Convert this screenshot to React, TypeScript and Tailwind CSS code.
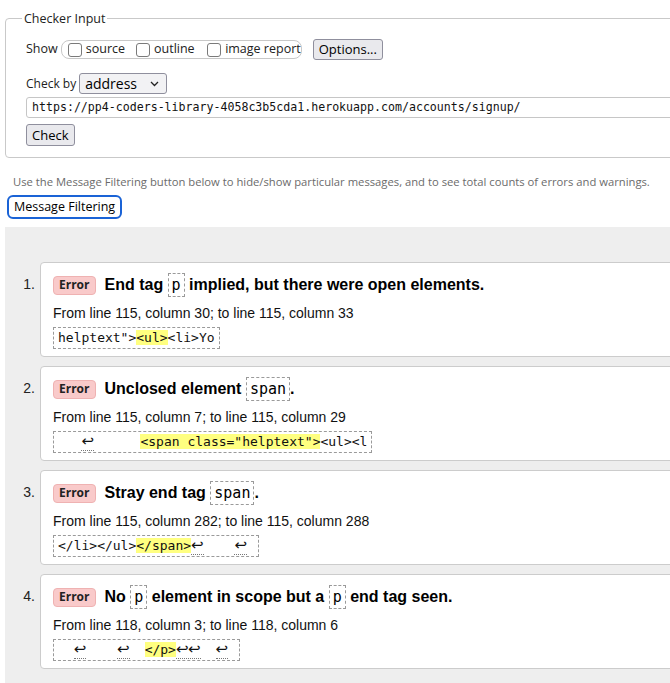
import type { ReactNode } from 'react'

const ui = "font-['Open_Sans',sans-serif]"
const mono = "font-['DejaVu_Sans_Mono',monospace]"

function Box({ children }: { children: ReactNode }) {
  return (
    <span className={`${mono} inline-block h-[24px] border border-dashed border-[#9a9a9a] px-[3px] align-middle text-[15px] font-normal leading-[22px]`}>
      {children}
    </span>
  )
}

function Mark({ children }: { children: ReactNode }) {
  return <span className="bg-[#ffff80]">{children}</span>
}

function Ret() {
  return (
    <span className="inline-block w-[12px] text-center font-['DejaVu_Sans',sans-serif] text-[15px] leading-[18px]">
      <span className="border-b border-dotted border-[#777]">↩</span>
    </span>
  )
}

function Checkbox({ label }: { label: string }) {
  return (
    <span className="flex items-center gap-[4px] whitespace-nowrap">
      <span className="h-[14px] w-[14px] rounded-[3px] border border-[#7a7a7a] bg-white" />
      <span>{label}</span>
    </span>
  )
}

function Message({ n, title, where, code }: { n: number; title: ReactNode; where: string; code: ReactNode }) {
  return (
    <div className="flex">
      <div className="flex h-[36px] w-[35px] shrink-0 items-end justify-end pr-[5px] text-[14px] text-[#222]">
        <span className="mb-[3px]">{n}.</span>
      </div>
      <div className="flex-1 rounded-[4px] border border-[#cccccc] bg-white pb-[7px] pl-[12px] pt-[10px]">
        <div className="flex h-[24px] items-center">
          <span className={`${ui} mr-[9px] flex h-[19px] items-center rounded-[4px] border border-[#efb2b2] bg-[#f9caca] px-[5px] text-[12px] font-bold text-[#222]`}>
            Error
          </span>
          <span className="whitespace-pre text-[16px] font-bold text-black">{title}</span>
        </div>
        <p className="mt-[8px] text-[14px] leading-[16px] text-[#111]">{where}</p>
        <div className={`${mono} mt-[6px] inline-block h-[22px] whitespace-pre border border-dashed border-[#9a9a9a] px-[4px] text-[13px] leading-[20px] text-[#111]`}>
          {code}
        </div>
      </div>
    </div>
  )
}

export default function App() {
  return (
    <div className="h-[683px] w-[670px] overflow-hidden bg-white font-['Liberation_Sans',Arial,sans-serif] text-black">
      <div className="w-[760px] px-[5px] pt-[10px]">
        <fieldset className={`${ui} rounded-[4px] border border-[#c9c9c9] pb-[11px] pl-[20px] text-[12.5px] text-[#222]`}>
          <legend className="-ml-[4px] px-[2px] leading-[17px]">Checker Input</legend>

          <div className="mt-[12px] flex h-[21px] items-center">
            <span className="mr-[3px]">Show</span>
            <span className="flex h-[19px] w-[241px] items-center rounded-[8px] border border-[#c8c8c8] pl-[6px]">
              <span className="w-[71px]"><Checkbox label="source" /></span>
              <span className="w-[74px]"><Checkbox label="outline" /></span>
              <Checkbox label="image report" />
            </span>
            <button className="ml-[11px] h-[21px] rounded-[3px] border border-[#8f8f9d] bg-[#e9e9ed] px-[5px] text-[13px] leading-[19px] text-black">
              Options...
            </button>
          </div>

          <div className="mt-[13px] flex h-[21px] items-center">
            <span className="mr-[3px] text-[12px]">Check by</span>
            <span className="flex h-[21px] w-[88px] items-center justify-between rounded-[3px] border border-[#8f8f9d] bg-[#f2f2f4] pl-[5px] pr-[7px] text-[14px] text-black">
              address
              <svg width="9" height="6" viewBox="0 0 9 6" fill="none" stroke="#222" strokeWidth="1.3">
                <path d="M1 1l3.5 3.5L8 1" />
              </svg>
            </span>
          </div>

          <div className={`${mono} mt-[3px] flex h-[21px] items-center rounded-[3px] border border-[#c6c6c6] pl-[5px] text-[11.6px] text-[#111]`}>
            https://pp4-coders-library-4058c3b5cda1.herokuapp.com/accounts/signup/
          </div>

          <button className="mt-[6px] h-[22px] rounded-[3px] border border-[#8f8f9d] bg-[#e9e9ed] px-[5px] text-[13px] leading-[20px] text-black">
            Check
          </button>
        </fieldset>

        <p className={`${ui} mt-[16px] pl-[8px] text-[11.25px] leading-[16px] text-[#6b6b6b]`}>
          Use the Message Filtering button below to hide/show particular messages, and to see total counts of errors and warnings.
        </p>

        <button className={`${ui} ml-[2px] mt-[5px] h-[24px] rounded-[6px] border-2 border-[#1a63d6] bg-white px-[5px] text-[12.5px] leading-[20px] text-black`}>
          Message Filtering
        </button>

        <div className="mt-[8px] flex h-[500px] flex-col gap-[9px] bg-[#eeeeee] pt-[35px]">
          <Message
            n={1}
            title={<>End tag <Box>p</Box> implied, but there were open elements.</>}
            where="From line 115, column 30; to line 115, column 33"
            code={<>helptext"&gt;<Mark>&lt;ul&gt;</Mark>&lt;li&gt;Yo</>}
          />
          <Message
            n={2}
            title={<>Unclosed element <Box>span</Box>.</>}
            where="From line 115, column 7; to line 115, column 29"
            code={<>{'   '}<Ret />{'      '}<Mark>&lt;span class="helptext"&gt;</Mark>&lt;ul&gt;&lt;l</>}
          />
          <Message
            n={3}
            title={<>Stray end tag <Box>span</Box>.</>}
            where="From line 115, column 282; to line 115, column 288"
            code={<>&lt;/li&gt;&lt;/ul&gt;<Mark>&lt;/span&gt;</Mark><Ret />{'    '}<Ret /> </>}
          />
          <Message
            n={4}
            title={<>No <Box>p</Box> element in scope but a <Box>p</Box> end tag seen.</>}
            where="From line 118, column 3; to line 118, column 6"
            code={<>{'  '}<Ret />{'    '}<Ret />{'  '}<Mark>&lt;/p&gt;</Mark><Ret /><Ret />{'  '}<Ret /> </>}
          />
        </div>
      </div>
    </div>
  )
}
